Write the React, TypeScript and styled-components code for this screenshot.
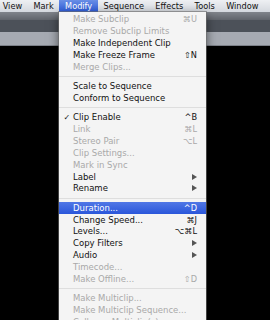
import styled, { createGlobalStyle } from "styled-components";

const GlobalStyle = createGlobalStyle`
  html, body {
    margin: 0;
    padding: 0;
    background: #000;
  }
  body {
    font-family: "DejaVu Sans", "Liberation Sans", sans-serif;
  }
`;

const Screen = styled.div`
  position: relative;
  width: 270px;
  height: 320px;
  overflow: hidden;
  background: #000;
  display: flex;
  flex-direction: column;
`;

const MenuBar = styled.div`
  height: 12px;
  flex-shrink: 0;
  display: flex;
  margin-left: -3px;
  background: linear-gradient(#eef0f3, #d4d8de);
`;

const BarItem = styled.div<{ $active?: boolean }>`
  padding: 0 5.7px;
  font-size: 8.2px;
  line-height: 12px;
  white-space: nowrap;
  color: ${(p) => (p.$active ? "#fff" : "#111")};
  background: ${(p) =>
    p.$active ? "linear-gradient(#6a8fe6, #2d5bd8)" : "transparent"};
`;

const TitleStrip = styled.div`
  height: 8px;
  flex-shrink: 0;
  background: linear-gradient(#80848b, #60646b);
`;

const ToolStrip = styled.div`
  height: 12px;
  flex-shrink: 0;
  background: #4c5159;
`;

const TabStrip = styled.div`
  height: 13px;
  flex-shrink: 0;
  background: #a6aab2;
  border-bottom: 1px solid #7c8088;
`;

const Viewer = styled.div`
  flex: 1;
  background: #000;
`;

const Dropdown = styled.div`
  position: absolute;
  left: 59px;
  top: 12px;
  width: 147px;
  padding-top: 1.5px;
  background: #f4f4f4;
  box-shadow: 0 0 0 1px rgba(110, 110, 110, 0.6), 0 4px 10px rgba(0, 0, 0, 0.6);
`;

const Row = styled.div<{ $disabled?: boolean; $selected?: boolean }>`
  height: 11.85px;
  display: flex;
  align-items: center;
  padding-right: 9px;
  font-size: 8.5px;
  white-space: nowrap;
  color: ${(p) => (p.$selected ? "#fff" : p.$disabled ? "#a9a9a9" : "#111")};
  background: ${(p) =>
    p.$selected ? "linear-gradient(#5077e6, #2a56da)" : "transparent"};
`;

const Check = styled.span`
  width: 14px;
  padding-left: 4.5px;
  box-sizing: border-box;
  flex-shrink: 0;
  font-size: 8px;
`;

const Label = styled.span`
  flex: 1;
`;

const Shortcut = styled.span`
  font-size: 8.2px;
`;

const Arrow = styled.span`
  width: 0;
  height: 0;
  margin-right: 0;
  border-top: 3.5px solid transparent;
  border-bottom: 3.5px solid transparent;
  border-left: 5px solid #555;
`;

const Separator = styled.div`
  height: 7.5px;
  display: flex;
  align-items: center;
  &::after {
    content: "";
    flex: 1;
    height: 1px;
    background: #dedede;
  }
`;

type Item =
  | "sep"
  | {
      label: string;
      key?: string;
      sub?: boolean;
      disabled?: boolean;
      checked?: boolean;
      selected?: boolean;
    };

const items: Item[] = [
  { label: "Make Subclip", key: "⌘U", disabled: true },
  { label: "Remove Subclip Limits", disabled: true },
  { label: "Make Independent Clip" },
  { label: "Make Freeze Frame", key: "⇧N" },
  { label: "Merge Clips...", disabled: true },
  "sep",
  { label: "Scale to Sequence" },
  { label: "Conform to Sequence" },
  "sep",
  { label: "Clip Enable", key: "^B", checked: true },
  { label: "Link", key: "⌘L", disabled: true },
  { label: "Stereo Pair", key: "⌥L", disabled: true },
  { label: "Clip Settings...", disabled: true },
  { label: "Mark in Sync", disabled: true },
  { label: "Label", sub: true },
  { label: "Rename", sub: true },
  "sep",
  { label: "Duration...", key: "^D", selected: true },
  { label: "Change Speed...", key: "⌘J" },
  { label: "Levels...", key: "⌥⌘L" },
  { label: "Copy Filters", sub: true },
  { label: "Audio", sub: true },
  { label: "Timecode...", disabled: true },
  { label: "Make Offline...", key: "⇧D", disabled: true },
  "sep",
  { label: "Make Multiclip...", disabled: true },
  { label: "Make Multiclip Sequence...", disabled: true },
  { label: "Collapse Multiclip(s)", disabled: true },
];

const menus = ["View", "Mark", "Modify", "Sequence", "Effects", "Tools", "Window"];

export default function App() {
  return (
    <Screen>
      <GlobalStyle />
      <MenuBar>
        {menus.map((m) => (
          <BarItem key={m} $active={m === "Modify"}>
            {m}
          </BarItem>
        ))}
      </MenuBar>
      <TitleStrip />
      <ToolStrip />
      <TabStrip />
      <Viewer />
      <Dropdown>
        {items.map((it, i) =>
          it === "sep" ? (
            <Separator key={i} />
          ) : (
            <Row key={i} $disabled={it.disabled} $selected={it.selected}>
              <Check>{it.checked ? "✓" : ""}</Check>
              <Label>{it.label}</Label>
              {it.key && <Shortcut>{it.key}</Shortcut>}
              {it.sub && <Arrow />}
            </Row>
          )
        )}
      </Dropdown>
    </Screen>
  );
}
